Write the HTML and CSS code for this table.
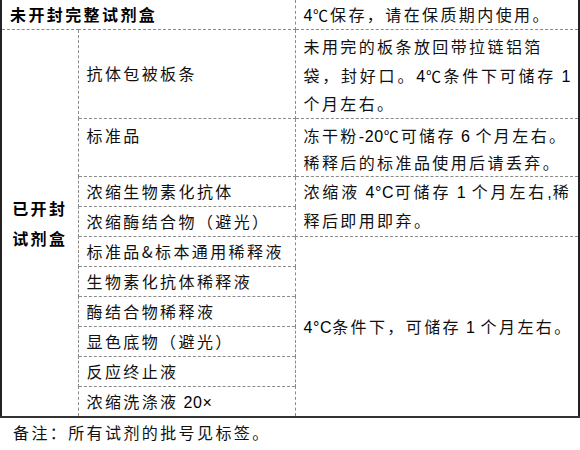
FILE: index.html
```html
<!DOCTYPE html>
<html lang="zh-CN">
<head>
<meta charset="utf-8">
<title>试剂盒保存</title>
<link rel="stylesheet" href="styles.css">
</head>
<body>
<table class="kit">
  <colgroup>
    <col class="c1"><col class="c2"><col class="c3">
  </colgroup>
  <tr class="first">
    <td colspan="2" class="head">未开封完整试剂盒</td>
    <td><span class="ln">4<span class="deg">℃</span></span>保存，请在保质期内使用。</td>
  </tr>
  <tr>
    <td rowspan="10" class="head center">已开封<br>试剂盒</td>
    <td>抗体包被板条</td>
    <td class="tall"><span class="line">未用完的板条放回带拉链铝箔</span><span class="line just">袋，封好口。<span class="ln">4<span class="deg">℃</span></span>条件下可储存<span class="ln"> 1</span></span><span class="line">个月左右。</span></td>
  </tr>
  <tr>
    <td class="top">标准品</td>
    <td class="two"><span class="line">冻干粉<span class="ln">-20<span class="deg">℃</span></span>可储存<span class="ln"> 6 </span>个月左右。</span><span class="line">稀释后的标准品使用后请丢弃。</span></td>
  </tr>
  <tr>
    <td>浓缩生物素化抗体</td>
    <td rowspan="2"><span class="line just">浓缩液<span class="ln"> 4°C</span>可储存<span class="ln"> 1 </span>个月左右<span class="ln">,</span>稀</span><span class="line">释后即用即弃。</span></td>
  </tr>
  <tr>
    <td>浓缩酶结合物（避光）</td>
  </tr>
  <tr>
    <td>标准品&amp;标本通用稀释液</td>
    <td rowspan="6"><span class="ln">4°C</span>条件下，可储存<span class="ln"> 1 </span>个月左右。</td>
  </tr>
  <tr><td>生物素化抗体稀释液</td></tr>
  <tr><td>酶结合物稀释液</td></tr>
  <tr><td>显色底物（避光）</td></tr>
  <tr><td>反应终止液</td></tr>
  <tr><td>浓缩洗涤液<span class="ln"> 20×</span></td></tr>
</table>
<p class="note">备注：所有试剂的批号见标签。</p>
</body>
</html>
```
FILE: styles.css
```css
html, body {
  margin: 0;
  padding: 0;
  background: #fff;
}
body {
  font-family: "Noto Sans CJK SC", sans-serif;
  font-size: 16px;
  color: #111;
  letter-spacing: 2.4px;
}
.ln {
  font-family: "Liberation Sans", "Noto Sans CJK SC", sans-serif;
  letter-spacing: 0.6px;
  color: #000;
  line-height: 0;
}
.deg {
  font-family: "Noto Sans CJK SC", sans-serif;
  font-size: 15px;
  letter-spacing: 2px;
  line-height: 0;
}
.kit {
  width: 578px;
  border-collapse: collapse;
  table-layout: fixed;
  border-left: 2px solid #222;
  border-right: 2px solid #222;
  border-bottom: 2px solid #333;
}
.c1 { width: 77px; }
.c2 { width: 217px; }
.c3 { width: 284px; }
.kit td {
  border: 1px dashed #8a8a8a;
  padding: 0 7px 0 8px;
  line-height: 29px;
  white-space: nowrap;
  vertical-align: middle;
}
.kit tr.first td {
  border-top: none;
}
.kit td.top {
  vertical-align: top;
  padding-top: 3px;
  line-height: 27px;
}
.kit td.tall {
  padding-top: 2px;
  line-height: 28.5px;
}
.kit td.two {
  padding-top: 3px;
  padding-bottom: 0;
  line-height: 27px;
}
.line {
  display: block;
}
.line.just {
  text-align: justify;
  text-align-last: justify;
  white-space: normal;
}
.kit td.head {
  font-weight: 700;
  color: #000;
}
.kit td.center {
  text-align: center;
  padding: 0;
  line-height: 30px;
  border-left: none;
}
.note {
  margin: 0;
  padding-left: 13px;
  line-height: 29px;
}
```
